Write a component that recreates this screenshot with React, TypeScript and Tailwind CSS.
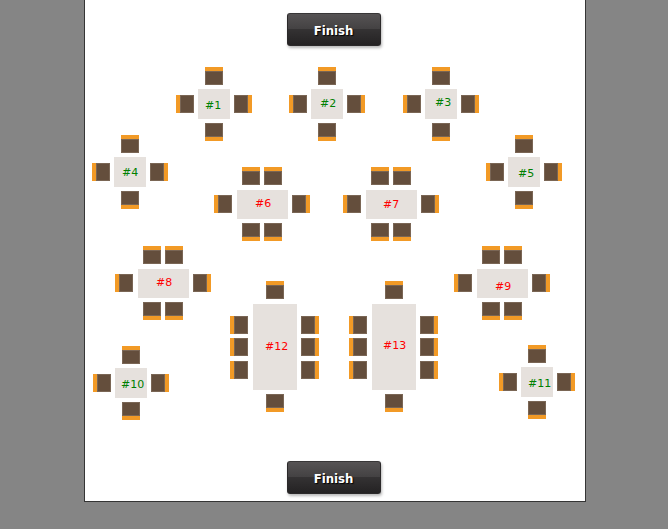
type Side = 'top' | 'bottom' | 'left' | 'right';

interface TableSpec {
  id: number;
  kind: 'small' | 'medium' | 'large';
  taken?: boolean;
  x: number;
  y: number;
  labelX: number;
  labelY: number;
}

const tables: TableSpec[] = [
  { id: 1, kind: 'small', x: 91, y: 67, labelX: 29, labelY: 33 },
  { id: 2, kind: 'small', x: 204, y: 67, labelX: 31, labelY: 31 },
  { id: 3, kind: 'small', x: 318, y: 67, labelX: 32, labelY: 30 },
  { id: 4, kind: 'small', x: 7, y: 135, labelX: 30, labelY: 32 },
  { id: 5, kind: 'small', x: 401, y: 135, labelX: 32, labelY: 33 },
  { id: 6, kind: 'medium', taken: true, x: 129, y: 167, labelX: 41, labelY: 31 },
  { id: 7, kind: 'medium', taken: true, x: 258, y: 167, labelX: 40, labelY: 32 },
  { id: 8, kind: 'medium', taken: true, x: 30, y: 246, labelX: 41, labelY: 31 },
  { id: 9, kind: 'medium', taken: true, x: 369, y: 246, labelX: 41, labelY: 35 },
  { id: 10, kind: 'small', x: 8, y: 346, labelX: 28, labelY: 33 },
  { id: 11, kind: 'small', x: 414, y: 345, labelX: 29, labelY: 33 },
  { id: 12, kind: 'large', taken: true, x: 145, y: 281, labelX: 35, labelY: 60 },
  { id: 13, kind: 'large', taken: true, x: 264, y: 281, labelX: 34, labelY: 59 },
];

const chairEdge: Record<Side, string> = {
  top: 'border-t-4',
  bottom: 'border-b-4',
  left: 'border-l-4',
  right: 'border-r-4',
};

const surface = {
  small: 'h-[30px] w-8',
  medium: 'h-[29px] w-[51px]',
  large: 'h-[86px] w-11',
};

function Chair({ side }: { side: Side }) {
  return (
    <div className={`h-[18px] w-[18px] shrink-0 border-[#f29a26] ${chairEdge[side]}`}>
      <div className="h-full w-full border border-[#7a6655] bg-[#644e3c]" />
    </div>
  );
}

function Chairs({ side, count }: { side: Side; count: number }) {
  const vertical = side === 'left' || side === 'right';
  const spacing = vertical ? 'flex-col gap-[4.5px]' : 'gap-1';
  const nudge = !vertical && count === 2 ? 'pr-px' : count === 3 ? 'pt-px' : '';
  return (
    <div className={`flex justify-center ${spacing} ${nudge}`}>
      {Array.from({ length: count }, (_, i) => (
        <Chair key={i} side={side} />
      ))}
    </div>
  );
}

function Table({ table }: { table: TableSpec }) {
  const { kind } = table;
  const ends = kind === 'medium' ? 2 : 1;
  const sides = kind === 'large' ? 3 : 1;
  return (
    <div className="absolute flex items-center gap-1" style={{ left: table.x, top: table.y }}>
      <Chairs side="left" count={sides} />
      <div className={`flex flex-col gap-1 ${kind === 'small' ? '' : 'pl-px'}`}>
        <Chairs side="top" count={ends} />
        <div className={`bg-[#e6e1dd] ${surface[kind]} ${kind === 'small' ? '' : 'mt-px'}`} />
        <Chairs side="bottom" count={ends} />
      </div>
      <Chairs side="right" count={sides} />
      <span
        className={`absolute text-[11px] leading-3 ${table.taken ? 'text-[#ff0000]' : 'text-[#008000]'}`}
        style={{ left: table.labelX, top: table.labelY }}
      >
        #{table.id}
      </span>
    </div>
  );
}

function FinishButton() {
  return (
    <button className="relative z-10 h-[33px] w-[94px] rounded-[3px] border border-[#2b292a] border-t-[#383637] bg-[linear-gradient(#565354_0%,#434142_50%,#343233_50%,#242223_100%)] pt-0.5 pr-px font-['DejaVu_Sans_Condensed','DejaVu_Sans',sans-serif] text-[13px] leading-none font-bold text-white shadow-[1px_2px_3px_rgba(0,0,0,0.28)] [text-shadow:1px_1px_1px_#000]">
      Finish
    </button>
  );
}

export default function App() {
  return (
    <div className="h-[529px] w-[668px] overflow-hidden bg-[#858585] font-['DejaVu_Sans',sans-serif]">
      <main className="relative ml-[84px] flex h-[502px] w-[502px] flex-col items-center justify-between border-x border-b border-[#353535] bg-white pt-[13px] pr-0.5 pb-[7px]">
        <FinishButton />
        {tables.map((table) => (
          <Table key={table.id} table={table} />
        ))}
        <FinishButton />
      </main>
    </div>
  );
}
